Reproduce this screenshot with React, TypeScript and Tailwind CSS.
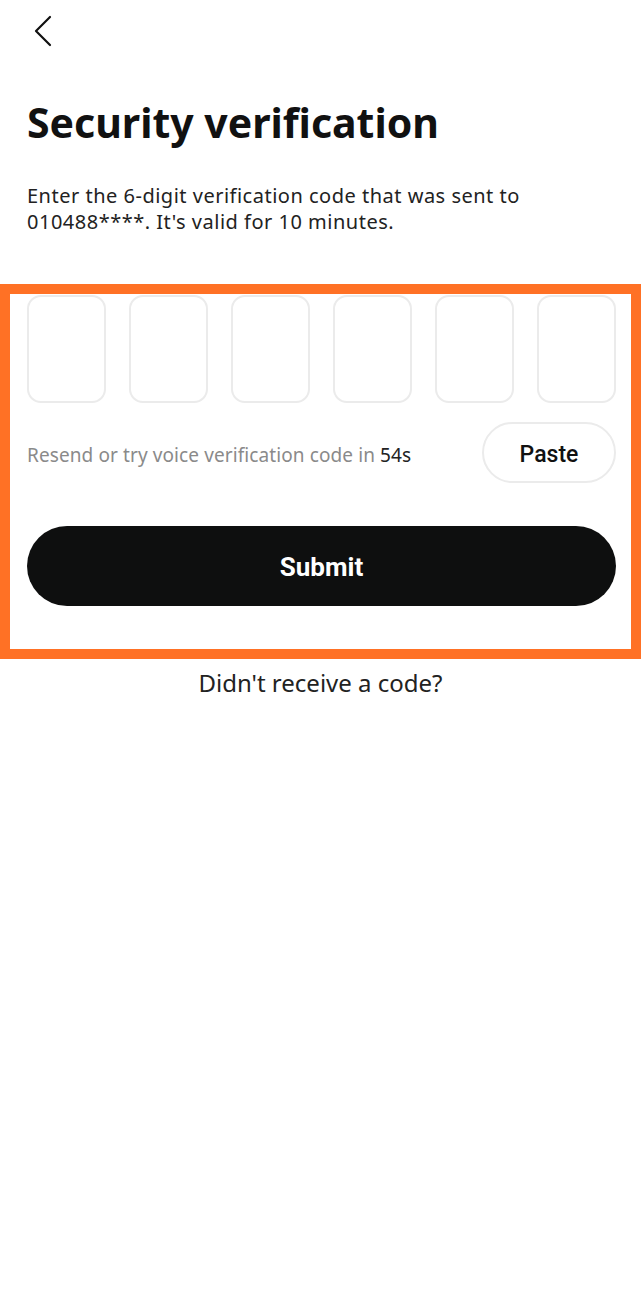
import React from 'react';

const boxes = [0, 1, 2, 3, 4, 5];

export default function App() {
  return (
    <div className="min-h-[1309px] w-[641px] bg-white text-[#111] [font-family:'Noto_Sans',Roboto,sans-serif]">
      <div className="px-[27px] pt-[14px]">
        <button className="flex h-[34px] w-[34px] items-center justify-start pl-[6px]">
          <svg width="20" height="32" viewBox="0 0 20 32" fill="none">
            <path d="M17 2L3 16l14 14" stroke="#111" strokeWidth="2.2" strokeLinecap="round" strokeLinejoin="round" />
          </svg>
        </button>
        <h1 className="mt-[48px] text-[41px] font-bold leading-[52px]">Security verification</h1>
        <p className="mt-[35px] text-[20px] leading-[26px] tracking-[0.5px] text-[#222]">
          Enter the 6-digit verification code that was sent to 010488****. It's valid for 10 minutes.
        </p>
      </div>

      <div className="mt-[49px] border-[10px] border-[#ff7125] pb-[43px] pl-[17px] pr-[15px] pt-[1px]">
        <div className="flex gap-[23px]">
          {boxes.map((b) => (
            <div key={b} className="h-[108px] w-[79px] rounded-[14px] border-2 border-[#ebebeb]" />
          ))}
        </div>
        <div className="mt-[19px] flex items-center justify-between">
          <span className="pt-[5px] text-[19px] tracking-[0.1px] text-[#8a8a8a]">
            Resend or try voice verification code in <span className="text-[#222]">54s</span>
          </span>
          <button className="h-[61px] w-[134px] rounded-full border-2 border-[#ebebeb] pt-[5px] text-[23px] font-medium text-[#111] [font-family:Roboto,sans-serif]">
            Paste
          </button>
        </div>
        <button className="mt-[43px] h-[80px] w-[589px] rounded-full bg-[#0e0f0f] pt-[2px] text-[26px] font-bold text-white [font-family:Roboto,sans-serif]">
          Submit
        </button>
      </div>

      <p className="mt-[6px] text-center text-[24px] text-[#222]">Didn't receive a code?</p>
    </div>
  );
}
